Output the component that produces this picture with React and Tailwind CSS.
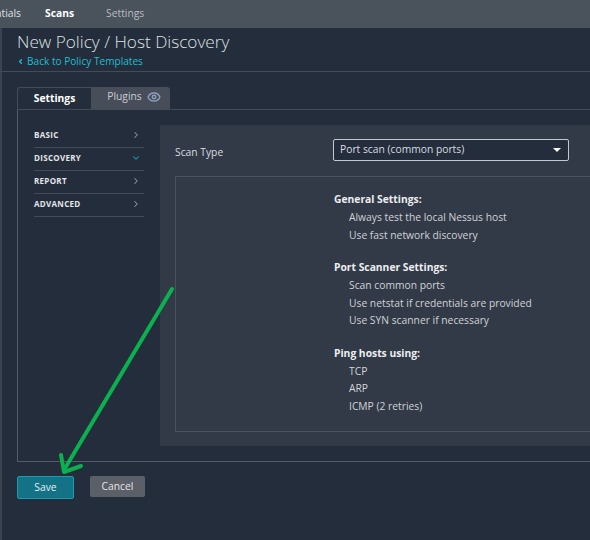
import { ChevronLeft, ChevronRight, ChevronDown, Eye } from 'lucide-react'

const menu = [
  { label: 'BASIC' },
  { label: 'DISCOVERY', open: true },
  { label: 'REPORT' },
  { label: 'ADVANCED' },
]

const groups = [
  { title: 'General Settings:', items: ['Always test the local Nessus host', 'Use fast network discovery'] },
  { title: 'Port Scanner Settings:', items: ['Scan common ports', 'Use netstat if credentials are provided', 'Use SYN scanner if necessary'] },
  { title: 'Ping hosts using:', items: ['TCP', 'ARP', 'ICMP (2 retries)'] },
]

export default function App() {
  return (
    <div className="relative w-[590px] h-[540px] overflow-hidden bg-[#232d3b] font-['Open_Sans',sans-serif] text-[#d9dce0]">
      {/* Top nav */}
      <div className="flex h-[28px] items-center bg-[#4a525c] text-[10.3px]">
        <div className="flex w-[21px] justify-end overflow-hidden whitespace-nowrap text-[#dfe1e4]">Credentials</div>
        <span className="ml-[24px] font-bold text-white">Scans</span>
        <span className="ml-[32px] text-[#b9bdc3]">Settings</span>
      </div>

      <div className="h-[512px] border-l-2 border-[#3a4350] pl-[15px]">
        {/* Header */}
        <div className="h-[43px] pt-[2px]">
          <h1 className="text-[17.2px] leading-[24px] font-light text-[#dfe2e5]">New Policy / Host Discovery</h1>
          <a className="flex items-center text-[10.1px] leading-[15px] text-[#22bdd0]">
            <ChevronLeft size={7} strokeWidth={5} className="mr-[3px]" />
            Back to Policy Templates
          </a>
        </div>
        <div className="-ml-[17px] h-px bg-[#434b58]"></div>

        {/* Tabs */}
        <div className="mt-[15px] flex h-[23px] items-stretch border-b border-[#434b58]">
          <div className="flex w-[74px] items-center justify-center rounded-tl-[3px] border-t border-l border-[#434b58] bg-[#232d3b] text-[10.3px] font-bold text-white">Settings</div>
          <div className="flex w-[79px] items-center justify-center gap-[5px] rounded-tr-[3px] bg-[#474e59] pb-[2px] pl-[7px] text-[10.3px] text-[#c9ccd1]">
            Plugins
            <Eye size={14} strokeWidth={2.5} className="text-[#8f9cc0]" />
          </div>
        </div>

        {/* Settings panel */}
        <div className="flex h-[352px] border-b border-l border-[#555c67] pt-[15px] pl-[16px]">
          <div className="w-[110px] shrink-0">
            {menu.map((item) => (
              <div key={item.label} className="flex h-[23px] items-center justify-between border-b border-[#434b58] pr-[3px] pb-[3px] text-[8px] font-bold tracking-[0.3px] text-[#e3e5e8]">
                {item.label}
                {item.open ? (
                  <ChevronDown size={10} strokeWidth={2.5} className="text-[#1ba0b4]" />
                ) : (
                  <ChevronRight size={10} strokeWidth={2.5} className="text-[#8f97a3]" />
                )}
              </div>
            ))}
          </div>

          <div className="ml-[16px] h-[321px] flex-1 bg-[#323a47] pt-[14px] pl-[15px]">
            <div className="flex h-[22px] items-center">
              <span className="w-[158px] pt-[6px] text-[10.3px] text-[#d9dce0]">Scan Type</span>
              <div className="flex h-[22px] w-[236px] items-center justify-between rounded-[2px] border border-[#c5c8cd] bg-[#232d3b] pr-[7px] pl-[6px] text-[10.3px] text-[#d9dce0]">
                Port scan (common ports)
                <span className="h-0 w-0 border-x-[4px] border-t-[4px] border-x-transparent border-t-white"></span>
              </div>
            </div>

            <div className="mt-[15px] h-[256px] border-t border-b border-l border-[#4a525e] pt-[15px] pl-[158px]">
              {groups.map((group) => (
                <div key={group.title} className="mb-[16px]">
                  <div className="mb-[2px] text-[10.3px] leading-[15px] font-bold text-[#eceef0]">{group.title}</div>
                  {group.items.map((text) => (
                    <div key={text} className="pl-[15px] text-[10.3px] leading-[17.5px] text-[#d0d3d7]">{text}</div>
                  ))}
                </div>
              ))}
            </div>
          </div>
        </div>

        {/* Buttons */}
        <div className="mt-[14px] flex items-start gap-[16px] text-[10.3px]">
          <button className="h-[23px] w-[57px] rounded-[2px] border border-[#1a9bae] bg-[#147286] text-[#e2eef0]">Save</button>
          <button className="h-[21px] w-[55px] rounded-[2px] bg-[#5b5f68] text-[#e4e5e7]">Cancel</button>
        </div>
      </div>

      {/* Annotation arrow */}
      <svg className="absolute top-0 left-0" width="590" height="540" fill="none" stroke="#0bb04f" strokeWidth="4" strokeLinecap="round" strokeLinejoin="round">
        <path d="M172 289 L64 470" />
        <path d="M61 455 L64 472 L81 466" />
      </svg>
    </div>
  )
}
